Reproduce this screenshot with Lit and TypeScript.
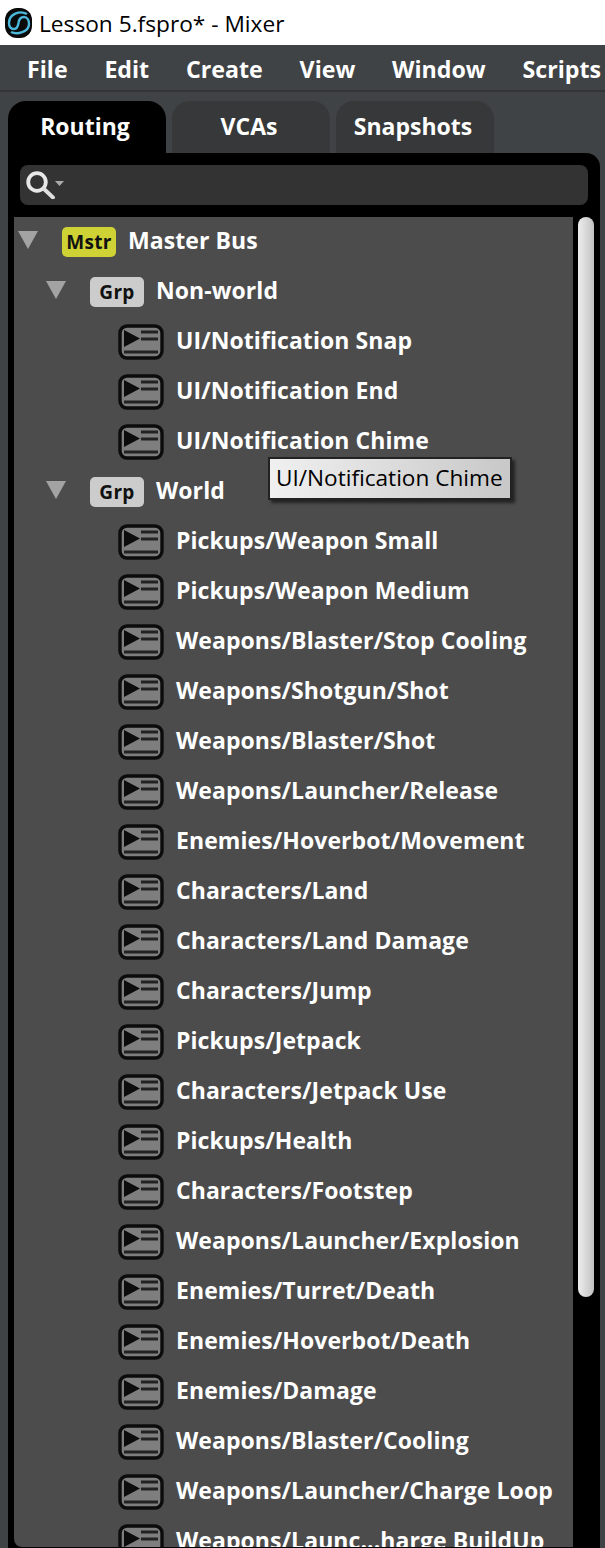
import { LitElement, html, css } from "lit";
import { customElement } from "lit/decorators.js";

const ITEMS_A = ["UI/Notification Snap", "UI/Notification End", "UI/Notification Chime"];
const ITEMS_B = [
  "Pickups/Weapon Small", "Pickups/Weapon Medium", "Weapons/Blaster/Stop Cooling", "Weapons/Shotgun/Shot",
  "Weapons/Blaster/Shot", "Weapons/Launcher/Release", "Enemies/Hoverbot/Movement", "Characters/Land",
  "Characters/Land Damage", "Characters/Jump", "Pickups/Jetpack", "Characters/Jetpack Use", "Pickups/Health",
  "Characters/Footstep", "Weapons/Launcher/Explosion", "Enemies/Turret/Death", "Enemies/Hoverbot/Death",
  "Enemies/Damage", "Weapons/Blaster/Cooling", "Weapons/Launcher/Charge Loop", "Weapons/Launc...harge BuildUp",
];

const arrow = html`<svg class="arrow" width="20" height="18" viewBox="0 0 20 18"><path d="M0 0H20L10 18Z" fill="#a3a3a3"/></svg>`;
const trackIcon = html`<svg class="ticon" width="46" height="36" viewBox="0 0 46 36">
  <rect x="2" y="2" width="42" height="32" rx="7" fill="#7e7e7e" stroke="#0c0c0c" stroke-width="3.4"/>
  <path d="M6 6L22 14.500L6 23Z" fill="#0c0c0c"/>
  <path d="M23 8H40M23 15H40M6 28H40" stroke="#222" stroke-width="2.8" fill="none"/>
</svg>`;

@customElement("app-root")
export class AppRoot extends LitElement {
  static styles = css`
    :host { display: block; width: 605px; height: 1548px; overflow: hidden; background: #404345; font-family: "Open Sans", "Noto Sans", sans-serif; position: relative; }
    .title { height: 45px; background: #fff; display: flex; align-items: center; padding-left: 5px; gap: 7px; color: #000; font-size: 22.700px; box-sizing: border-box; white-space: nowrap; }
    .title span { position: relative; top: 1px; }
    .title svg { position: relative; top: 0.500px; }
    .menu { height: 47px; box-sizing: border-box; border-bottom: 2px solid #323436; display: flex; align-items: center; padding: 2px 0 0 27px; gap: 36.800px; color: #fff; font-weight: 700; font-size: 23.200px; white-space: nowrap; }
    .tabs { display: flex; gap: 6px; padding: 9px 0 0 8px; height: 52px; }
    .tab { width: 158px; height: 52px; box-sizing: border-box; border-radius: 18px 18px 0 0; background: #363839; color: #fff; font-weight: 700; font-size: 23px; display: flex; align-items: center; justify-content: center; padding: 0 4px 2px 0; }
    .tab.on { background: #000; }
    .panel { margin-left: 8px; width: 592px; height: 1395px; box-sizing: border-box; background: #000; border-radius: 0 14px 0 0; padding: 12px 0 1px 6px; display: flex; flex-direction: column; gap: 12px; }
    .search { margin-left: 6px; width: 568px; height: 40px; flex: none; border-radius: 8px; background: #333; display: flex; align-items: center; padding-left: 6px; box-sizing: border-box; }
    .body { flex: 1; min-height: 0; display: flex; gap: 5px; }
    .list { width: 559px; background: #4c4c4c; border-radius: 0 0 0 8px; overflow: hidden; position: relative; }
    .row { height: 50px; display: flex; align-items: center; color: #fff; font-weight: 700; font-size: 23px; white-space: nowrap; letter-spacing: 0.07px; }
    .row > span:last-of-type { position: relative; top: -2px; }
    .row.l0 { padding-left: 4px; }
    .row.l1 { padding-left: 32px; }
    .row.l2 { padding-left: 104px; gap: 12px; }
    .row > .arrow { position: relative; top: -2px; }
    .arrow { flex: none; }
    .l0 .badge { margin-left: 24px; margin-right: 12px; width: 54px; background: #cfd234; }
    .l1 .badge { margin-left: 24px; margin-right: 12px; width: 54px; background: #cccccc; }
    .badge { height: 30px; border-radius: 5px; color: #111; font-size: 19px; font-weight: 700; display: flex; align-items: center; justify-content: center; letter-spacing: 0.3px; }
    .ticon { flex: none; }
    .tip { position: absolute; left: 254px; top: 240px; width: 244px; height: 43px; box-sizing: border-box; border: 2px solid #222; background: linear-gradient(90deg, #f0f0f0, #c8c8c8); color: #000; font-size: 22.600px; font-weight: 400; display: flex; align-items: center; padding: 0 0 3px 6px; box-shadow: 3px 3px 3px rgba(0,0,0,.55); white-space: nowrap; }
    .track { width: 16px; }
    .thumb { width: 16px; height: 1080px; border-radius: 8px; background: linear-gradient(90deg, #eeeeee, #c2c2c2); }
  `;

  render() {
    const item = (t: string) => html`<div class="row l2">${trackIcon}<span>${t}</span></div>`;
    return html`
      <div class="title">
        <svg width="27" height="30" viewBox="0 0 27 30">
          <rect x="0" y="0" width="27" height="30" rx="12" fill="#0a0a0a"/>
          <path d="M22 6C15 2 4 6 4 15C4 19 6 21 9 21C12 21 13 18 13.500 15C14 11 16 9 19 9C22 9 24 12 24 16C24 24 12 27 6 24" fill="none" stroke="#4bb8dc" stroke-width="2.400"/>
        </svg>
        <span>Lesson 5.fspro* - Mixer</span>
      </div>
      <div class="menu"><span>File</span><span>Edit</span><span>Create</span><span>View</span><span>Window</span><span>Scripts</span></div>
      <div class="tabs"><div class="tab on">Routing</div><div class="tab">VCAs</div><div class="tab">Snapshots</div></div>
      <div class="panel">
        <div class="search">
          <svg width="38" height="28" viewBox="0 0 38 28">
            <circle cx="11" cy="11" r="8.800" fill="none" stroke="#e8e8e8" stroke-width="3.800"/>
            <path d="M18 18L27 26.500" stroke="#e0e0e0" stroke-width="3.800" stroke-linecap="round"/>
            <path d="M29 10H38L33.500 15Z" fill="#aaa"/>
          </svg>
        </div>
        <div class="body">
          <div class="list">
            <div class="row l0">${arrow}<span class="badge">Mstr</span><span>Master Bus</span></div>
            <div class="row l1">${arrow}<span class="badge">Grp</span><span>Non-world</span></div>
            ${ITEMS_A.map(item)}
            <div class="row l1">${arrow}<span class="badge">Grp</span><span>World</span></div>
            ${ITEMS_B.map(item)}
            <div class="tip">UI/Notification Chime</div>
          </div>
          <div class="track"><div class="thumb"></div></div>
        </div>
      </div>
    `;
  }
}
